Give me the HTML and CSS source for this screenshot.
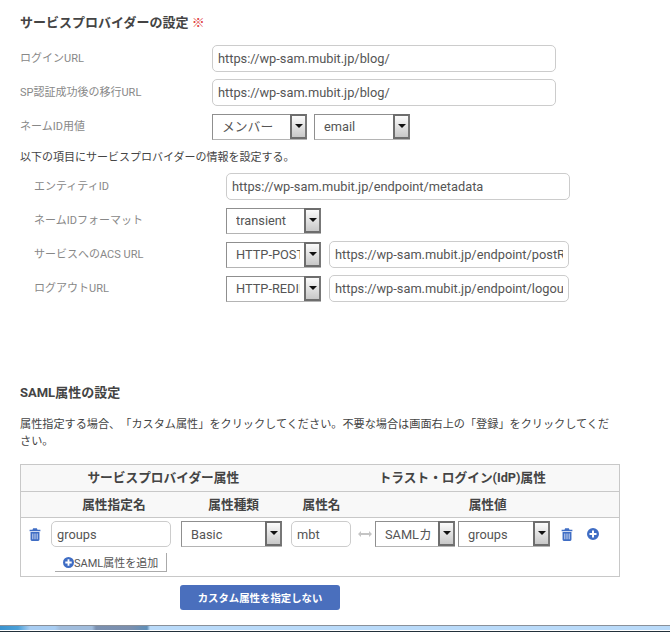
FILE: index.html
```html
<!DOCTYPE html>
<html lang="ja">
<head>
    <meta charset="UTF-8">
    <title>サービスプロバイダーの設定</title>
    <link rel="stylesheet" href="styles.css">
</head>
<body>
    <svg class="defs" width="0" height="0">
        <symbol id="trash" viewBox="0 0 12 14">
            <path d="M4 0.3h4l0.7 1.500h3.100v1.700h-11.600v-1.700h3.100z M1.200 4.300h9.600v8.200a1.400 1.400 0 0 1-1.400 1.400h-6.800a1.400 1.400 0 0 1-1.400-1.400z M3.300 5.800v6.300h0.800v-6.300z M5.600 5.800v6.300h0.800v-6.300z M7.900 5.800v6.300h0.800v-6.300z" fill-rule="evenodd"/>
        </symbol>
        <symbol id="plus" viewBox="0 0 12 12">
            <path d="M6 0a6 6 0 1 0 0 12a6 6 0 1 0 0-12z M5 2.500h2v2.500h2.500v2h-2.500v2.500h-2v-2.500h-2.500v-2h2.500z" fill-rule="evenodd"/>
        </symbol>
    </svg>

    <main class="page">
        <h2 class="title">サービスプロバイダーの設定 <span class="req">※</span></h2>

        <div class="row">
            <label class="lbl">ログインURL</label>
            <input class="txt w344" value="https://wp-sam.mubit.jp/blog/">
        </div>
        <div class="row">
            <label class="lbl">SP認証成功後の移行URL</label>
            <input class="txt w344" value="https://wp-sam.mubit.jp/blog/">
        </div>
        <div class="row">
            <label class="lbl">ネームID用値</label>
            <div class="sel w95"><select><option>メンバー</option></select><span class="arrow"></span></div>
            <div class="sel w96"><select><option>email</option></select><span class="arrow"></span></div>
        </div>

        <p class="note">以下の項目にサービスプロバイダーの情報を設定する。</p>

        <div class="sub">
            <div class="row">
                <label class="lbl">エンティティID</label>
                <input class="txt w344" value="https://wp-sam.mubit.jp/endpoint/metadata">
            </div>
            <div class="row">
                <label class="lbl">ネームIDフォーマット</label>
                <div class="sel w95"><select><option>transient</option></select><span class="arrow"></span></div>
            </div>
            <div class="row">
                <label class="lbl">サービスへのACS URL</label>
                <div class="sel w95"><select><option>HTTP-POST</option></select><span class="arrow"></span></div>
                <input class="txt w240" value="https://wp-sam.mubit.jp/endpoint/postResponse">
            </div>
            <div class="row">
                <label class="lbl">ログアウトURL</label>
                <div class="sel w95"><select><option>HTTP-REDIRECT</option></select><span class="arrow"></span></div>
                <input class="txt w240" value="https://wp-sam.mubit.jp/endpoint/logout">
            </div>
        </div>

        <h3 class="heading">SAML属性の設定</h3>
        <p class="desc">属性指定する場合、「カスタム属性」をクリックしてください。不要な場合は画面右上の「登録」をクリックしてください。</p>

        <div class="attrs">
            <div class="head head-top">
                <div class="c-sp">サービスプロバイダー属性</div>
                <div class="c-idp">トラスト・ログイン(IdP)属性</div>
            </div>
            <div class="head head-sub">
                <div class="c-name">属性指定名</div>
                <div class="c-type">属性種類</div>
                <div class="c-attr">属性名</div>
                <div class="c-val">属性値</div>
            </div>
            <div class="attr-row">
                <svg class="ico trash-left"><use href="#trash"/></svg>
                <input class="txt w120" value="groups">
                <div class="sel w101"><select><option>Basic</option></select><span class="arrow"></span></div>
                <input class="txt w60" value="mbt">
                <svg class="link" width="14" height="6" viewBox="0 0 14 6"><path d="M0 3l3-3v2h8v-2l3 3l-3 3v-2h-8v2z"/></svg>
                <div class="sel w80"><select><option>SAMLカ</option></select><span class="arrow"></span></div>
                <div class="sel w92"><select><option>groups</option></select><span class="arrow"></span></div>
                <svg class="ico trash-right"><use href="#trash"/></svg>
                <svg class="ico plus-right"><use href="#plus"/></svg>
            </div>
            <div class="add-row">
                <button class="add"><svg class="ico-add"><use href="#plus"/></svg>SAML属性を追加</button>
            </div>
        </div>

        <div class="actions">
            <button class="primary">カスタム属性を指定しない</button>
        </div>
    </main>

    <div class="strip"></div>
</body>
</html>
```

FILE: styles.css
```css
html, body {
    margin: 0;
    padding: 0;
    height: 632px;
    overflow: hidden;
    background-color: #fff;
}

body {
    font-family: Roboto, "Noto Sans CJK JP", sans-serif;
    color: #444;
    font-size: 11px;
    text-spacing-trim: space-all;
}

.defs {
    position: absolute;
}

.page {
    height: 625px;
    padding: 14px 50px 0 20px;
    box-sizing: border-box;
}

.title {
    margin: 0 0 13px;
    font-size: 13px;
    line-height: 18px;
    font-weight: 700;
    color: #444;
}

.req {
    color: #e04040;
    font-weight: 400;
}

.row {
    display: flex;
    align-items: center;
    gap: 7px;
    height: 27px;
    margin-bottom: 7px;
}

.lbl {
    width: 185px;
    flex: none;
    margin-right: 0;
    color: #888;
    font-size: 11px;
    line-height: 18px;
}

.txt {
    box-sizing: border-box;
    height: 27px;
    padding: 0 5px;
    border: 1px solid #ccc;
    border-radius: 5px;
    font-family: Roboto, "Noto Sans CJK JP", sans-serif;
    font-size: 12.8px;
    color: #555;
    background: #fff;
    outline: none;
    flex: none;
}

.w344 { width: 344px; }
.w240 { width: 240px; margin-left: 1px; }
.w120 { width: 120px; }
.w60 { width: 60px; }

.sel {
    position: relative;
    flex: none;
    height: 26px;
}

.w95 { width: 95px; }
.w96 { width: 96px; }
.w101 { width: 101px; }
.w80 { width: 80px; }
.w92 { width: 92px; }

.sel select {
    appearance: none;
    -webkit-appearance: none;
    display: block;
    width: 100%;
    height: 100%;
    box-sizing: border-box;
    padding: 0 20px 0 9px;
    border: 1px solid #8f8f8f;
    border-bottom-color: #b4b4b4;
    border-right-color: #b4b4b4;
    border-radius: 0;
    background: #fff;
    color: #555;
    font-family: Roboto, "Noto Sans CJK JP", sans-serif;
    font-size: 12.8px;
    outline: none;
}

.arrow {
    position: absolute;
    top: 0;
    right: 0;
    width: 17px;
    height: 25px;
    box-sizing: border-box;
    border: 2px solid #6d6d6d;
    border-right-color: #777;
    background: linear-gradient(#fbfbfb, #c8c8c8);
}

.arrow:after {
    content: '';
    position: absolute;
    left: 3px;
    top: 8px;
    border-left: 4px solid transparent;
    border-right: 4px solid transparent;
    border-top: 4px solid #111;
}

.note {
    margin: 9px 0 6px;
    font-size: 11px;
    line-height: 18px;
    color: #444;
}

.sub {
    padding-left: 14px;
}

.heading {
    margin: 82px 0 0;
    font-size: 13px;
    line-height: 18px;
    font-weight: 700;
    color: #444;
}

.desc {
    margin: 14px 0 14px;
    width: 600px;
    font-size: 11.15px;
    line-height: 17px;
    color: #444;
}

.attrs {
    width: 600px;
    box-sizing: border-box;
    border: 1px solid #c8c8c8;
    height: 113px;
}

.head {
    display: flex;
    background-color: #f8f8f8;
    font-weight: 700;
    font-size: 12.7px;
    color: #444;
    text-align: center;
    border-bottom: 1px solid #c8c8c8;
}

.head-top {
    height: 26px;
    line-height: 25px;
}

.head-sub {
    height: 25px;
    line-height: 25px;
    padding-left: 26px;
}

.c-sp { width: 285px; }
.c-idp { width: 314px; }
.c-name { width: 134px; }
.c-type { width: 106px; }
.c-attr { width: 70px; }
.c-val { width: 263px; }

.attr-row {
    display: flex;
    align-items: center;
    height: 26px;
    padding-top: 3px;
}

.attr-row .txt, .attr-row .sel {
    height: 26px;
}

.ico {
    flex: none;
    fill: #3f6dc4;
}

.trash-left {
    width: 12px;
    height: 13px;
    margin: 0 10px 0 8px;
}

.attr-row .w120 { margin-right: 10px; }
.attr-row .w101 { margin-right: 9px; }

.link {
    flex: none;
    margin: 0 3px 0 7px;
    fill: #c4c4c4;
}

.attr-row .w80 { margin-right: 3px; }

.trash-right {
    width: 12px;
    height: 13px;
    margin-left: 11px;
}

.plus-right {
    width: 12px;
    height: 12px;
    margin-left: 14px;
}

.add-row {
    padding: 6px 0 0 34px;
}

.add {
    display: flex;
    align-items: center;
    height: 19px;
    width: 112px;
    padding: 0 0 0 8px;
    box-sizing: border-box;
    border: none;
    border-right: 1px solid #aaa;
    border-bottom: 1px solid #aaa;
    background: #fff;
    color: #555;
    font-family: Roboto, "Noto Sans CJK JP", sans-serif;
    font-size: 11px;
    white-space: nowrap;
}

.ico-add {
    width: 11px;
    height: 11px;
    fill: #3f6dc4;
}

.actions {
    padding: 8px 0 0 160px;
}

.primary {
    display: block;
    width: 160px;
    height: 25px;
    padding: 0;
    border: none;
    border-radius: 3px;
    background-color: #4a6fbd;
    color: #fff;
    font-family: Roboto, "Noto Sans CJK JP", sans-serif;
    font-size: 10.4px;
    font-weight: 700;
}

.strip {
    height: 7px;
    box-sizing: border-box;
    border-top: 1px solid #8a9099;
    border-bottom: 1px solid #22303a;
    background: linear-gradient(90deg, #3a93cf 0, #4aa0d8 18px, #a8cdf2 30px, #a8cdf2 55px, #a0bcdc 60px, #a0bcdc 92px, #7a90b0 96px, #7b8fae 130px, #5f8fb8 147px, #b9daf9 150px, #b9daf9 100%);
    box-shadow: inset 0 -1px 0 #fff;
}
```
